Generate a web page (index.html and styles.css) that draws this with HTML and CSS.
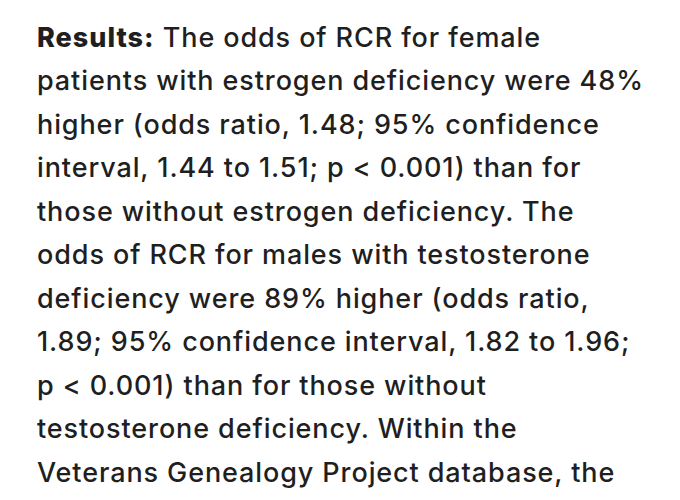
FILE: index.html
```html
<!DOCTYPE html>
<html>
<head>
<meta charset="utf-8">
<link rel="stylesheet" href="styles.css">
</head>
<body>
<p class="abstract"><strong class="label">Results:</strong> The odds of RCR for female<br>patients with estrogen deficiency were 48%<br>higher (odds ratio, 1.48; 95% confidence<br>interval, 1.44 to 1.51; p &lt; 0.001) than for<br>those without estrogen deficiency. The<br>odds of RCR for males with testosterone<br>deficiency were 89% higher (odds ratio,<br>1.89; 95% confidence interval, 1.82 to 1.96;<br>p &lt; 0.001) than for those without<br>testosterone deficiency. Within the<br>Veterans Genealogy Project database, the</p>
</body>
</html>
```

FILE: styles.css
```css
html, body {
  margin: 0;
  padding: 0;
  background: #ffffff;
  overflow: hidden;
}
body {
  width: 680px;
  height: 500px;
}
.abstract {
  margin: 0;
  padding: 15.5px 0 0 37px;
  width: 643px;
  white-space: nowrap;
  font-family: Inter, "Noto Sans", sans-serif;
  font-size: 27px;
  font-weight: 500;
  line-height: 43.5px;
  letter-spacing: 0.9px;
  color: #1f1f1f;
}
.label {
  font-weight: 800;
  letter-spacing: 1px;
}
```
